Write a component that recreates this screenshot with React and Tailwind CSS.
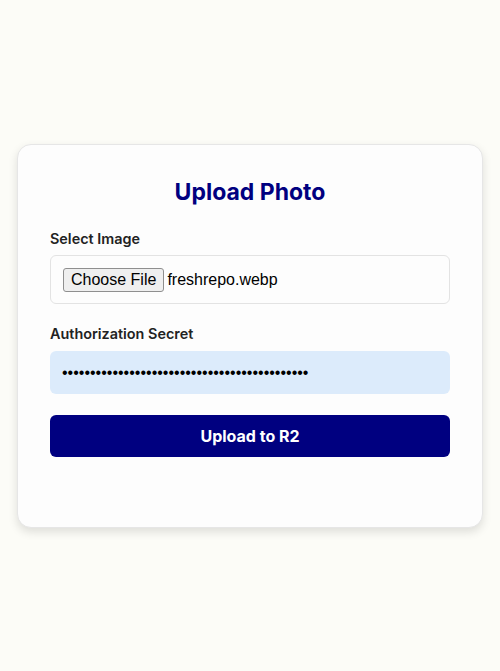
import React from "react";

export default function App() {
  return (
    <div className="min-h-[671px] w-[500px] bg-[#fcfcf7] flex items-start justify-center pt-[144px]" style={{ fontFamily: "Inter, 'Noto Sans', sans-serif" }}>
      <div className="w-[466px] rounded-[14px] border border-[#e6e6e6] bg-[#fdfdfd] shadow-[0_4px_10px_rgba(0,0,0,0.12)] px-8 pt-[31px] pb-[70px]">
        <h2 className="text-center text-[23px] leading-8 font-bold text-[#000080] mb-[22px]">Upload Photo</h2>
        <div className="mb-[7px] text-[14.4px] leading-[18px] font-semibold text-[#222]">Select Image</div>
        <div className="flex items-center gap-[3px] h-[49px] rounded-[6px] border border-[#e3e3e3] bg-[#fdfdfd] px-3 mb-[21px]">
          <button className="h-[24px] px-[7px] border border-[#8f8f8f] rounded-[3px] bg-[#efefef] text-[16px] text-black leading-none" style={{ fontFamily: "'Liberation Sans', Arial, sans-serif" }}>Choose File</button>
          <span className="text-[16px] text-black" style={{ fontFamily: "'Liberation Sans', Arial, sans-serif" }}>freshrepo.webp</span>
        </div>
        <div className="mb-[8px] text-[14.4px] leading-[18px] font-semibold text-[#222]">Authorization Secret</div>
        <div className="flex items-center h-[43px] rounded-[6px] bg-[#dcebfb] px-3 mb-[21px]">
          <span className="text-[16px] text-black" style={{ fontFamily: "'Liberation Sans', Arial, sans-serif" }}>{"•".repeat(44)}</span>
        </div>
        <button className="w-full h-[42px] rounded-[6px] bg-[#000080] text-white text-[16px] font-bold">Upload to R2</button>
      </div>
    </div>
  );
}
